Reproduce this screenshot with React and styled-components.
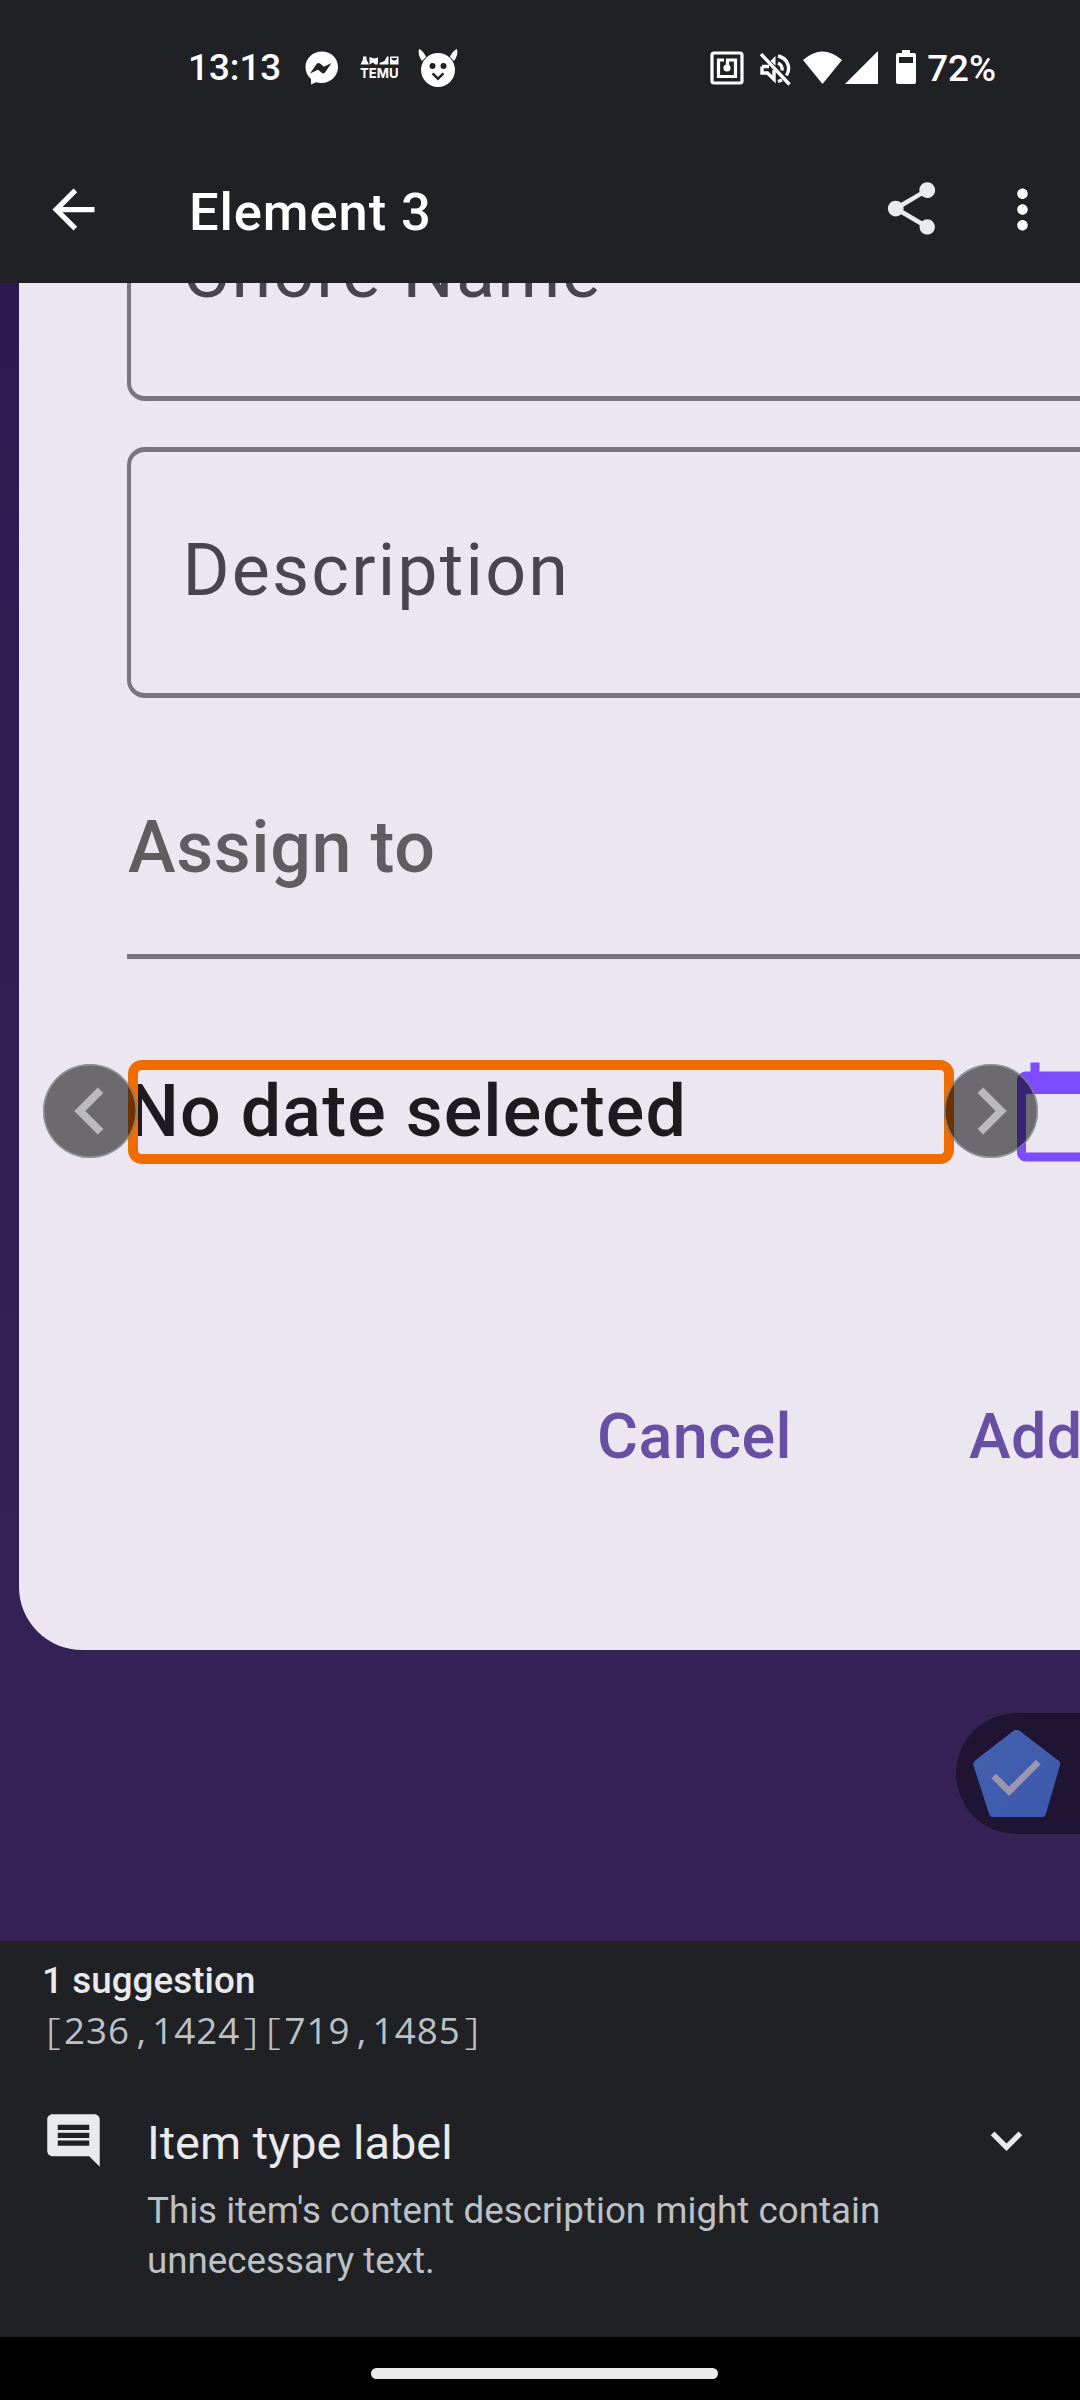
import React from "react";
import styled, { createGlobalStyle } from "styled-components";

const Global = createGlobalStyle`
  *, *::before, *::after { box-sizing: border-box; }
  body { margin: 0; background: #000; font-family: Roboto, "Liberation Sans", sans-serif; }
  svg { display: block; flex: none; }
`;

const Screen = styled.div`
  width: 1080px;
  height: 2400px;
  display: flex;
  flex-direction: column;
  overflow: hidden;
  background: #202124;
`;

const StatusBar = styled.header`
  height: 136px;
  flex: none;
  display: flex;
  justify-content: space-between;
  align-items: flex-start;
  padding: 45px 84px 0 188px;
  color: #fff;
`;

const StatusGroup = styled.div`
  display: flex;
  align-items: flex-start;
`;

const StatusText = styled.span`
  font-size: 36.75px;
  font-weight: 500;
  line-height: 44px;
  margin-top: ${(p) => p.$drop || 0}px;
  margin-left: ${(p) => p.$gap || 0}px;
  white-space: nowrap;
`;

const Glyph = styled.svg`
  width: ${(p) => p.$w}px;
  height: ${(p) => p.$h || p.$w}px;
  margin-left: ${(p) => p.$gap || 0}px;
  margin-top: ${(p) => p.$drop || 0}px;
  fill: ${(p) => p.$color || "#fff"};
`;

const AppBar = styled.div`
  height: 147px;
  flex: none;
  display: flex;
  align-items: flex-start;
  padding: 42px 26px 0 42px;
`;

const Title = styled.h1`
  margin: 3px 0 0 84px;
  flex: 1;
  font-size: 52.5px;
  font-weight: 500;
  line-height: 62px;
  letter-spacing: 0.9px;
  color: #fff;
`;

const Preview = styled.main`
  position: relative;
  height: 1658px;
  flex: none;
  overflow: hidden;
  background: linear-gradient(180deg, #2c1a50 0%, #342154 70%, #362257 100%);
`;

const Dialog = styled.section`
  width: 1300px;
  height: 1367px;
  margin-left: 19px;
  padding-left: 108px;
  background: #ece6f0;
  border-radius: 0 0 63px 63px;
  display: flex;
  flex-direction: column;
`;

const Field = styled.div`
  height: ${(p) => p.$h}px;
  flex: none;
  margin-top: ${(p) => p.$gap}px;
  padding: ${(p) => p.$pad}px 0 0 51.5px;
  border: solid #79747e;
  border-width: 5px 4px;
  border-radius: 18px;
  font-size: 71.8px;
  line-height: 84px;
  letter-spacing: 2.2px;
  color: #49454f;
`;

const Select = styled.div`
  height: 167px;
  margin-top: 94px;
  padding: 14px 0 0 1px;
  border-bottom: 5px solid #79747e;
  font-size: 71.8px;
  font-weight: 500;
  line-height: 84px;
  letter-spacing: 0.6px;
  color: #5f5d62;
`;

const DateRow = styled.div`
  display: flex;
  margin-top: 99px;
  height: 108px;
`;

const DateText = styled.div`
  width: 881px;
  padding: 12px 0 0 1px;
  font-size: 71.8px;
  font-weight: 500;
  line-height: 84px;
  letter-spacing: 1.1px;
  color: #1d1b20;
`;

const Actions = styled.div`
  display: flex;
  margin: 234px 0 0 470px;
  gap: 177px;
`;

const Action = styled.span`
  font-size: 62.8px;
  font-weight: 500;
  line-height: 74px;
  letter-spacing: 0.45px;
  color: #6750a4;
`;

const Highlight = styled.div`
  position: absolute;
  left: 128px;
  top: 777px;
  width: 826px;
  height: 104px;
  border: 10px solid #ef6c00;
  border-radius: 14px;
`;

const RoundButton = styled.div`
  position: absolute;
  left: ${(p) => p.$x}px;
  top: 781px;
  width: 94px;
  height: 94px;
  border-radius: 50%;
  background: rgba(0, 0, 0, 0.54);
  box-shadow: inset 0 0 0 1.5px rgba(154, 170, 174, 0.7);
`;

const Fab = styled.div`
  position: absolute;
  left: 955px;
  top: 1429px;
  width: 140px;
  height: 123px;
  border-radius: 62px 0 0 62px;
  background: #1f1433;
  border: 1px solid #35264b;
  padding: 17px 0 0 17px;
`;

const Panel = styled.section`
  height: 396px;
  flex: none;
  padding: 18px 42px 0;
  background: #202124;
`;

const Heading = styled.h2`
  margin: 0;
  font-size: 36.75px;
  font-weight: 500;
  line-height: 43px;
  letter-spacing: 0.08px;
  color: #e8eaed;
`;

const Bounds = styled.div`
  margin-top: 7px;
  height: 43px;
  font-family: "Open Sans", "Noto Sans", sans-serif;
  font-size: 36.75px;
  line-height: 43px;
  letter-spacing: 1.02px;
  color: #bdc1c6;
  white-space: nowrap;
`;

const Mark = styled.span`
  display: inline-block;
  width: 22.05px;
  letter-spacing: 0;
  text-align: center;
  font-weight: ${(p) => (p.$wide ? 300 : 400)};
  transform: scaleX(${(p) => (p.$wide ? 1.3 : 1)});
`;

const Suggestion = styled.article`
  display: flex;
  align-items: flex-start;
  margin-top: 57px;
`;

const SuggestionBody = styled.div`
  flex: 1;
  margin-left: 42px;
  padding-top: 6px;
`;

const SuggestionTitle = styled.h3`
  margin: 0;
  font-size: 46.9px;
  font-weight: 400;
  line-height: 55px;
  color: #e8eaed;
`;

const SuggestionText = styled.p`
  margin: 16px 0 0;
  width: 780px;
  font-size: 36.75px;
  line-height: 49.9px;
  color: #bdc1c6;
`;

const NavBar = styled.footer`
  height: 63px;
  flex: none;
  display: flex;
  justify-content: center;
  padding: 31px 0 0 9px;
  background: #000;
`;

const NavHandle = styled.div`
  width: 347px;
  height: 11px;
  border-radius: 6px;
  background: #ebebeb;
`;

function BoundsValue({ value }) {
  return (
    <Bounds>
      {value.split(/([[\],])/).filter(Boolean).map((part, i) =>
        /\d/.test(part) ? part : <Mark key={i} $wide={part !== ","}>{part}</Mark>
      )}
    </Bounds>
  );
}

export default function App() {
  return (
    <>
      <Global />
      <Screen>
        <StatusBar>
          <StatusGroup>
            <StatusText $drop={1}>13:13</StatusText>
            <Glyph $w={34} $gap={24} $drop={6} viewBox="0 0 34 34">
              <path fillRule="evenodd" d="M17 0.500C8 0.500 .5 7 .5 16c0 5 2 9 5.500 12v5.500l5-2.200c1.800.5 3.600.7 5.500.7 9 0 16.500-7 16.500-16S26 .5 17 .5zM5 22.500L12 12.500q1.500-1.200 3 0l4 3.300 7.500-3.800-6.500 9.500q-1.500 1.500-3 .5l-4-3.300z" />
            </Glyph>
            <Glyph $w={39} $h={24} $gap={21} $drop={11} viewBox="0 0 39 24">
              <text x="0" y="22.200" fontFamily="Inter, sans-serif" fontWeight="700" fontSize="13.800" textLength="38.500" lengthAdjust="spacingAndGlyphs">TEMU</text>
              <path d="M3 .5h3.500v3l2.500 5H.5l2.500-5zM9.500 1l4.500 1.500 4-1v4l-.5 3h-2.500l-2-2-3.500 2zM19.500 7l5-2 2.500-4.500h1.500v8h-9z" />
              <path fillRule="evenodd" d="M30 .5h8.500v8H30zM31.500 3q2.700 3 5.500 0v-1h-5.500z" />
            </Glyph>
            <Glyph $w={40} $h={40} $gap={19} $drop={3} viewBox="0 0 40 40">
              <path fillRule="evenodd" d="M20 5a17 17 0 1 0 0 34 17 17 0 0 0 0-34zM14.500 15a3 3 0 1 1 0 6 3 3 0 0 1 0-6zM25.500 15a3 3 0 1 1 0 6 3 3 0 0 1 0-6zM15.500 24.500l4.500 4.500 4.500-4.500 1.800 1.800-6.300 6.200-6.300-6.200z" />
              <path d="M1 1c3 1 6 5 7 8l-4 4C1 9 0 5 1 1zM39 1c-3 1-6 5-7 8l4 4c3-4 4-8 3-12z" />
            </Glyph>
          </StatusGroup>
          <StatusGroup>
            <Glyph $w={34} $drop={6} viewBox="0 0 34 34">
              <rect x="2" y="2" width="30" height="30" rx="2" fill="none" stroke="#fff" strokeWidth="3.200" />
              <path d="M14 9H8.500v16.500h17V9h-8v7" fill="none" stroke="#fff" strokeWidth="3.200" />
              <circle cx="17" cy="17" r="3.600" />
            </Glyph>
            <Glyph $w={31} $h={33} $gap={15.5} $drop={8} viewBox="0 0 31 33">
              <g fill="none" stroke="#fff" strokeWidth="3.400">
                <path d="M1 1l28.500 30.500M2 13.500v6.500h5.500l6.500 6.500V17M2 13.500h7" />
                <path d="M18 3c10 2.200 13 12 8.500 19.500" />
                <path d="M18 10c4 2 4.500 4 4 7.500" />
                <path d="M18 28.500l4-1.500" />
              </g>
              <path d="M15.500 3v9.500l-5-4.500z" />
            </Glyph>
            <Glyph $w={39} $h={33} $gap={12} $drop={6} viewBox="0 0 39 33">
              <path d="M0 9Q19.500-8 39 9L19.500 33z" />
            </Glyph>
            <Glyph $w={33} $h={33} $gap={3} $drop={6} viewBox="0 0 33 33">
              <path d="M33 0v33H0z" />
            </Glyph>
            <Glyph $w={20} $h={34} $gap={18} $drop={5} viewBox="0 0 20 34">
              <path fillRule="evenodd" d="M6 0h8v3h4q2 0 2 2v27q0 2-2 2H2q-2 0-2-2V5q0-2 2-2h4zM3 7v6h14V7z" />
            </Glyph>
            <StatusText $drop={2} $gap={11.5}>72%</StatusText>
          </StatusGroup>
        </StatusBar>
        <AppBar>
          <Glyph $w={63} viewBox="0 0 24 24">
            <path d="M20 11H7.830l5.590-5.590L12 4l-8 8 8 8 1.410-1.410L7.830 13H20v-2z" />
          </Glyph>
          <Title>Element 3</Title>
          <Glyph $w={63} $drop={-1} $color="#e8eaed" viewBox="0 0 24 24">
            <path d="M18 16.080c-.76 0-1.440.3-1.960.77L8.910 12.700c.05-.23.09-.46.09-.7s-.04-.47-.09-.7l7.050-4.110c.54.5 1.250.81 2.040.81 1.660 0 3-1.340 3-3s-1.340-3-3-3-3 1.340-3 3c0 .24.04.47.09.7L8.040 9.810C7.500 9.310 6.790 9 6 9c-1.660 0-3 1.340-3 3s1.340 3 3 3c.79 0 1.500-.31 2.040-.81l7.120 4.160c-.05.21-.08.43-.08.65 0 1.610 1.310 2.920 2.920 2.920s2.920-1.310 2.920-2.920-1.310-2.920-2.920-2.920z" />
          </Glyph>
          <Glyph $w={63} $gap={48} viewBox="0 0 24 24">
            <path d="M12 8c1.100 0 2-.9 2-2s-.9-2-2-2-2 .9-2 2 .9 2 2 2zm0 2c-1.100 0-2 .9-2 2s.9 2 2 2 2-.9 2-2-.9-2-2-2zm0 6c-1.100 0-2 .9-2 2s.9 2 2 2 2-.9 2-2-.9-2-2-2z" />
          </Glyph>
        </AppBar>
        <Preview>
          <Dialog>
            <Field $h={251} $gap={-133} $pad={76}>Chore Name</Field>
            <Field $h={251} $gap={46} $pad={77}>Description</Field>
            <Select>Assign to</Select>
            <DateRow>
              <DateText>No date selected</DateText>
              <Glyph $w={108} $color="#7c4dff" viewBox="0 0 24 24">
                <path d="M20 3h-1V1h-2v2H7V1H5v2H4c-1.100 0-2 .9-2 2v16c0 1.100.9 2 2 2h16c1.100 0 2-.9 2-2V5c0-1.100-.9-2-2-2zm0 18H4V8h16v13z" />
              </Glyph>
            </DateRow>
            <Actions>
              <Action>Cancel</Action>
              <Action>Add</Action>
            </Actions>
          </Dialog>
          <Highlight />
          <RoundButton $x={42.5}>
            <Glyph $w={94} $color="#bababc" viewBox="0 0 24 24">
              <path d="M15.410 7.410L14 6l-6 6 6 6 1.410-1.410L10.830 12z" />
            </Glyph>
          </RoundButton>
          <RoundButton $x={943.5}>
            <Glyph $w={94} $color="#bababc" viewBox="0 0 24 24">
              <path d="M10 6L8.590 7.410 13.170 12l-4.580 4.590L10 18l6-6z" />
            </Glyph>
          </RoundButton>
          <Fab>
            <Glyph $w={87} viewBox="0 0 88 88">
              <defs>
                <linearGradient id="badge" x1="0" y1="0" x2="1" y2="1">
                  <stop offset="0" stopColor="#4660ae" />
                  <stop offset="1" stopColor="#3b59ad" />
                </linearGradient>
              </defs>
              <path fill="url(#badge)" d="M40 1.500q4-3 8 0l38 29q3 2 2 5L74 84q-1 4-4 4H20q-3 0-4-4L.5 36q-1-3 2-5.500z" />
              <path d="M21 46.500l15.500 15.500 29.500-29.500" fill="none" stroke="#9d95b0" strokeWidth="6.600" />
            </Glyph>
          </Fab>
        </Preview>
        <Panel>
          <Heading>1 suggestion</Heading>
          <BoundsValue value="[236,1424][719,1485]" />
          <Suggestion>
            <Glyph $w={63} $color="#e8eaed" viewBox="0 0 24 24">
              <path d="M21.990 4c0-1.100-.89-2-1.990-2H4c-1.100 0-2 .9-2 2v12c0 1.100.9 2 2 2h14l4 4-.01-18zM18 14H6v-2h12v2zm0-3H6V9h12v2zm0-3H6V6h12v2z" />
            </Glyph>
            <SuggestionBody>
              <SuggestionTitle>Item type label</SuggestionTitle>
              <SuggestionText>This item's content description might contain unnecessary text.</SuggestionText>
            </SuggestionBody>
            <Glyph $w={63} $color="#e8eaed" viewBox="0 0 24 24">
              <path d="M16.590 8.590L12 13.170 7.410 8.590 6 10l6 6 6-6z" />
            </Glyph>
          </Suggestion>
        </Panel>
        <NavBar>
          <NavHandle />
        </NavBar>
      </Screen>
    </>
  );
}
